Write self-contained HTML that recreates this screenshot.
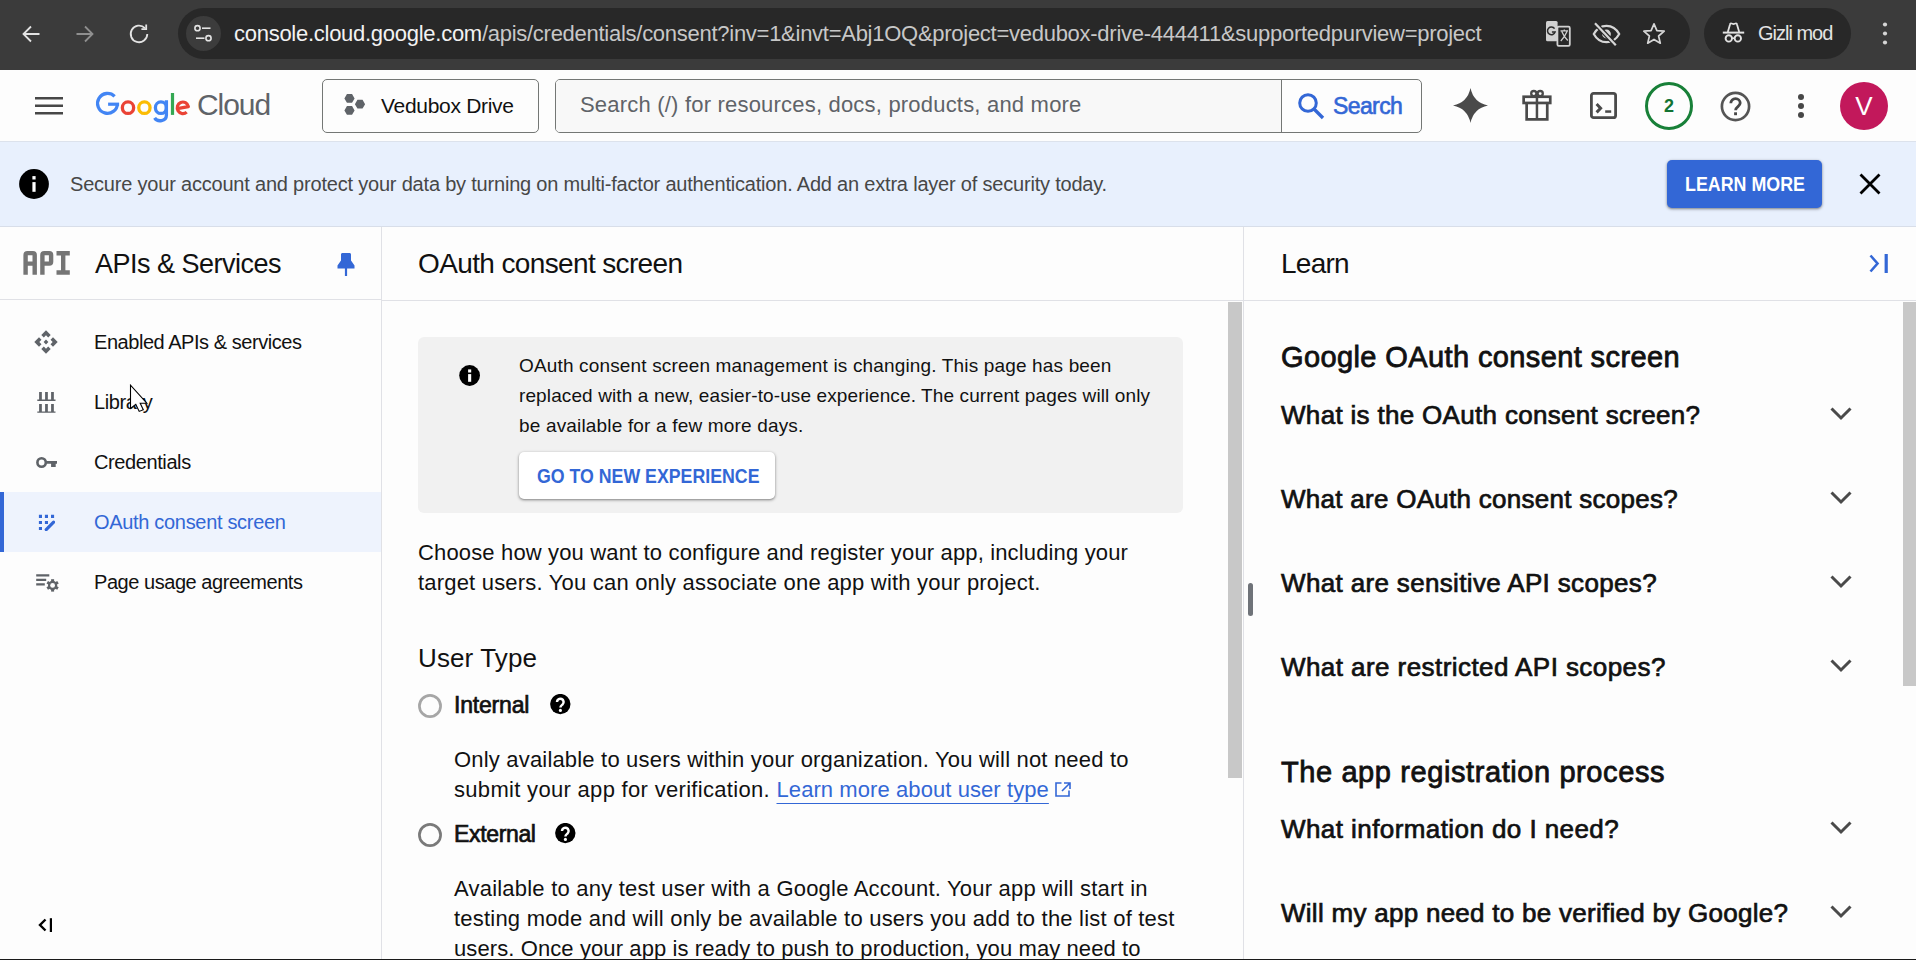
<!DOCTYPE html>
<html><head><meta charset="utf-8">
<style>
*{box-sizing:border-box;margin:0;padding:0}
html,body{width:1916px;height:960px;overflow:hidden;background:#fdfdfd;font-family:"Liberation Sans",sans-serif;color:#111}
.a{position:absolute;white-space:nowrap}
svg{position:absolute;display:block}
#chrome{position:absolute;left:0;top:0;width:1916px;height:70px;background:#3b3b3b}
#urlpill{position:absolute;left:178px;top:8px;width:1512px;height:51px;border-radius:26px;background:#282828}
#incog{position:absolute;left:1704px;top:8px;width:147px;height:51px;border-radius:26px;background:#282828}
#hdr{position:absolute;left:0;top:70px;width:1916px;height:71px;background:#fdfdfd}
#banner{position:absolute;left:0;top:141px;width:1916px;height:86px;background:#e8f0fd;border-top:1px solid #dce2ec;border-bottom:1px solid #d8dee9}
.btnshadow{box-shadow:0 1px 2px rgba(0,0,0,.3),0 1px 3px 1px rgba(0,0,0,.15)}
#nav{position:absolute;left:0;top:227px;width:382px;height:733px;border-right:1px solid #e0e1e6}
.navitem{position:absolute;left:0;width:381px;height:60px}
.navtxt{position:absolute;left:94px;font-size:20px;color:#111;white-space:nowrap}
#main{position:absolute;left:382px;top:227px;width:862px;height:733px;border-right:1px solid #e0e1e6}
#learn{position:absolute;left:1244px;top:227px;width:672px;height:733px}
.hline{position:absolute;height:1px;background:#e0e1e6}
.q{position:absolute;left:1281px;font-size:26px;font-weight:normal;-webkit-text-stroke:0.7px #111;color:#111;white-space:nowrap}
</style></head><body>

<div id="chrome">
  <svg style="left:21px;top:24px" width="20" height="20" viewBox="0 0 20 20"><path d="M18.5 10H2.5M10 2.5L2.5 10L10 17.5" fill="none" stroke="#e3e3e3" stroke-width="1.8"/></svg>
  <svg style="left:75px;top:24px" width="20" height="20" viewBox="0 0 20 20"><path d="M1.5 10H17.5M10 2.5L17.5 10L10 17.5" fill="none" stroke="#8f8f8f" stroke-width="1.8"/></svg>
  <svg style="left:127px;top:21.5px" width="24" height="24" viewBox="0 0 24 24"><path d="M20.3 12A8.3 8.3 0 1 1 17.9 6.1" fill="none" stroke="#e3e3e3" stroke-width="1.8"/><path d="M19.2 2.4V7.2H14.4" fill="none" stroke="#e3e3e3" stroke-width="1.8"/></svg>
  <div id="urlpill"></div>
  <div style="position:absolute;left:186px;top:16px;width:35px;height:35px;border-radius:50%;background:#3c3c3c"></div>
  <svg style="left:193px;top:24px" width="21" height="19" viewBox="0 0 21 19"><circle cx="4.5" cy="4.2" r="2.6" fill="none" stroke="#e3e3e3" stroke-width="1.6"/><path d="M9 4.2h8.5" stroke="#e3e3e3" stroke-width="1.6"/><circle cx="15.5" cy="14.2" r="2.6" fill="none" stroke="#e3e3e3" stroke-width="1.6"/><path d="M3 14.2h8.5" stroke="#e3e3e3" stroke-width="1.6"/></svg>
  <div class="a" id="url" style="left:234px;top:21px;font-size:22px;line-height:26px;color:#c7c7c7;letter-spacing:-0.27px"><span style="color:#f2f2f2">console.cloud.google.com</span>/apis/credentials/consent?inv=1&amp;invt=Abj1OQ&amp;project=vedubox-drive-444411&amp;supportedpurview=project</div>
  <svg style="left:1545px;top:20px" width="26" height="27" viewBox="0 0 26 27"><rect x="1" y="0.9" width="11.6" height="20.3" rx="1.5" fill="#d0d0d0"/><rect x="12.4" y="6.6" width="12.4" height="19.3" rx="1.3" fill="#282828" stroke="#d0d0d0" stroke-width="1.8"/><path d="M9.6 8.6A3.9 3.9 0 1 0 10.1 12.1H6.9" fill="none" stroke="#2a2a2a" stroke-width="1.5"/><path d="M15.5 10.8H23M19.3 9.4V10.8M16.8 11.6Q19.2 17.5 22.8 20.6M22 11.6Q19.5 17.5 15.8 21" fill="none" stroke="#d0d0d0" stroke-width="1.3"/></svg>
  <svg style="left:1592px;top:22px" width="29" height="24" viewBox="0 0 29 24"><path d="M1.8 12C4.8 6.4 9.3 3.8 14.5 3.8S24.2 6.4 27.2 12C24.2 17.6 19.7 20.2 14.5 20.2S4.8 17.6 1.8 12z" fill="none" stroke="#d6d6d6" stroke-width="2.2"/><circle cx="14.5" cy="12" r="4.4" fill="#d6d6d6"/><path d="M3 1.2L23.8 23.2" stroke="#282828" stroke-width="4.6"/><path d="M3 1.2L23.8 23.2" stroke="#d6d6d6" stroke-width="2.2"/></svg>
  <svg style="left:1642px;top:22px" width="24" height="23" viewBox="0 0 24 23"><path d="M12 1.8L14.9 8.6L22.2 9.2L16.6 14L18.3 21.2L12 17.4L5.7 21.2L7.4 14L1.8 9.2L9.1 8.6z" fill="none" stroke="#d6d6d6" stroke-width="1.7" stroke-linejoin="round"/></svg>
  <div id="incog"></div>
  <svg style="left:1722px;top:22px" width="23" height="21" viewBox="0 0 23 21"><path d="M5.8 10L8 2.4C8.2 1.6 8.8 1.3 9.5 1.5L11.5 2.1L13.5 1.5C14.2 1.3 14.8 1.6 15 2.4L17.2 10" fill="none" stroke="#e3e3e3" stroke-width="1.8"/><path d="M0.8 10.6h21.4" stroke="#e3e3e3" stroke-width="2"/><circle cx="6.8" cy="16.4" r="3.2" fill="none" stroke="#e3e3e3" stroke-width="1.9"/><circle cx="15.8" cy="16.4" r="3.2" fill="none" stroke="#e3e3e3" stroke-width="1.9"/><path d="M10 16.2h2.6" stroke="#e3e3e3" stroke-width="1.6"/></svg>
  <div class="a" id="gizli" style="left:1758px;top:20px;font-size:20px;line-height:26px;color:#e3e3e3;letter-spacing:-1.0px">Gizli mod</div>
  <svg style="left:1882px;top:22px" width="6" height="23" viewBox="0 0 6 23"><circle cx="3" cy="2.5" r="2.1" fill="#d6d6d6"/><circle cx="3" cy="11.5" r="2.1" fill="#d6d6d6"/><circle cx="3" cy="20.5" r="2.1" fill="#d6d6d6"/></svg>
</div>

<div id="hdr">
  <svg style="left:35px;top:27px" width="28" height="18" viewBox="0 0 28 18"><path d="M0 1.25h28M0 8.75h28M0 16.25h28" stroke="#474747" stroke-width="2.6"/></svg>
  <svg style="left:90px;top:15px" width="110" height="42" viewBox="0 0 110 42"><path d="M24.6 11.4A9.95 9.95 0 1 0 27.45 18.7" fill="none" stroke="#4285f4" stroke-width="3.3"/><rect x="18.1" y="17.6" width="11" height="3.2" fill="#4285f4"/><ellipse cx="38" cy="22.65" rx="5.65" ry="5.8" fill="none" stroke="#ea4335" stroke-width="3.3"/><ellipse cx="54.4" cy="22.65" rx="5.65" ry="5.8" fill="none" stroke="#fbbc04" stroke-width="3.3"/><ellipse cx="70.9" cy="22.65" rx="5.5" ry="5.8" fill="none" stroke="#4285f4" stroke-width="3.3"/><path d="M76.4 15.2V30.2C76.4 36.2 67.6 37.6 64.6 32.8" fill="none" stroke="#4285f4" stroke-width="3.3"/><rect x="80.9" y="8" width="3.2" height="21.9" fill="#34a853"/><path d="M87.3 23.6L98.4 21.6A5.65 5.8 0 1 0 96.7 27.1" fill="none" stroke="#ea4335" stroke-width="3.2" stroke-linejoin="round"/></svg>
  <div class="a" id="gcloud" style="left:197px;top:17px;font-size:30px;line-height:36px;color:#5f6368;letter-spacing:-1.05px">Cloud</div>
  <div style="position:absolute;left:322px;top:9px;width:217px;height:54px;border:1px solid #747775;border-radius:5px"></div>
  <svg style="left:344px;top:23px" width="22" height="23" viewBox="0 0 22 23"><path d="M0.40 5.40L2.95 0.98L8.05 0.98L10.60 5.40L8.05 9.82L2.95 9.82ZM10.90 11.20L13.45 6.78L18.55 6.78L21.10 11.20L18.55 15.62L13.45 15.62ZM0.40 17.40L2.95 12.98L8.05 12.98L10.60 17.40L8.05 21.82L2.95 21.82Z" fill="#5f6368"/></svg>
  <div class="a" id="proj" style="left:381px;top:24px;font-size:21px;line-height:24px;color:#111;letter-spacing:-0.3px">Vedubox Drive</div>
  <div style="position:absolute;left:555px;top:9px;width:867px;height:54px;border:1px solid #747775;border-radius:5px;background:#fdfdfd;overflow:hidden"><div style="position:absolute;left:0;top:0;width:726px;height:52px;background:#f8f8f8;border-right:1px solid #747775"></div></div>
  <div class="a" id="ph" style="top:22px;font-size:22px;line-height:26px;color:#5f6368;letter-spacing:0.2px;left:580px">Search (/) for resources, docs, products, and more</div>
  <svg style="left:1297px;top:22px" width="28" height="28" viewBox="0 0 28 28"><circle cx="11" cy="11" r="8.3" fill="none" stroke="#3367d6" stroke-width="3"/><path d="M17 17L26 26" stroke="#3367d6" stroke-width="3.4"/></svg>
  <div class="a" id="sbtn" style="left:1333px;top:23px;font-size:23px;line-height:26px;color:#3367d6;font-weight:normal;-webkit-text-stroke:0.6px #3367d6;letter-spacing:-0.6px">Search</div>
  <svg style="left:1453px;top:18px" width="35" height="35" viewBox="0 0 35 35"><path d="M17.5 0Q20.5 14.5 35 17.5Q20.5 20.5 17.5 35Q14.5 20.5 0 17.5Q14.5 14.5 17.5 0Z" fill="#4a4a4a"/></svg>
  <svg style="left:1521px;top:19px" width="32" height="33" viewBox="0 0 32 33"><rect x="2.65" y="7.75" width="26.6" height="6.2" fill="none" stroke="#4a4a4a" stroke-width="2.7"/><path d="M5.65 14V30.35H26.25V14" fill="none" stroke="#4a4a4a" stroke-width="2.7"/><path d="M15.95 7.5V30.5" stroke="#4a4a4a" stroke-width="2.5"/><circle cx="12.8" cy="4.6" r="2.6" fill="none" stroke="#4a4a4a" stroke-width="2.3"/><circle cx="19.2" cy="4.6" r="2.6" fill="none" stroke="#4a4a4a" stroke-width="2.3"/></svg>
  <svg style="left:1590px;top:22px" width="27" height="27" viewBox="0 0 27 27"><rect x="1.4" y="1.4" width="24.2" height="24.2" rx="2.2" fill="none" stroke="#4a4a4a" stroke-width="2.8"/><path d="M6.6 12L10.6 16.2L6.6 20.4" fill="none" stroke="#4a4a4a" stroke-width="3"/><rect x="15.2" y="18.3" width="6" height="2.5" fill="#4a4a4a"/></svg>
  <div style="position:absolute;left:1645px;top:12px;width:48px;height:48px;border:3px solid #188038;border-radius:50%"></div>
  <div class="a" style="left:1645px;top:25px;width:48px;text-align:center;font-size:18px;line-height:22px;font-weight:bold;color:#137333">2</div>
  <svg style="left:1719.5px;top:21px" width="31" height="31" viewBox="0 0 31 31"><circle cx="15.5" cy="15.5" r="13.6" fill="none" stroke="#555" stroke-width="2.7"/><path d="M10.8 12.3C10.8 9.6 12.9 7.6 15.5 7.6S20.2 9.6 20.2 12.1C20.2 15.6 15.6 15.6 15.6 19.3" fill="none" stroke="#474747" stroke-width="2.8"/><rect x="14.1" y="21.3" width="2.9" height="2.9" fill="#474747"/></svg>
  <svg style="left:1797px;top:24px" width="8" height="24" viewBox="0 0 8 24"><circle cx="4" cy="3" r="3" fill="#474747"/><circle cx="4" cy="12" r="3" fill="#474747"/><circle cx="4" cy="21" r="3" fill="#474747"/></svg>
  <div style="position:absolute;left:1840px;top:12px;width:48px;height:48px;border-radius:50%;background:#c2185b"></div>
  <div class="a" style="left:1840px;top:21px;width:48px;text-align:center;font-size:26px;line-height:30px;color:#fff">V</div>
</div>
<div id="banner">
  <svg style="left:19px;top:27px" width="30" height="30" viewBox="0 0 30 30"><circle cx="15" cy="15" r="14.9" fill="#000"/><rect x="13.4" y="13.1" width="3.2" height="9.7" fill="#fff"/><rect x="13.4" y="7.1" width="3.2" height="3.4" fill="#fff"/></svg>
  <div class="a" id="btxt" style="left:70px;top:31px;font-size:20px;line-height:22px;color:#474747;letter-spacing:-0.2px">Secure your account and protect your data by turning on multi-factor authentication. Add an extra layer of security today.</div>
  <div class="btnshadow" style="position:absolute;left:1667px;top:18px;width:155px;height:48px;border-radius:5px;background:#3367d6"></div>
  <div class="a" id="lm" style="left:1685px;top:31px;font-size:20px;line-height:22px;color:#fff;font-weight:bold;transform:scaleX(0.892);transform-origin:0 0">LEARN MORE</div>
  <svg style="left:1859px;top:31px" width="22" height="22" viewBox="0 0 22 22"><path d="M1.5 1.5L20.5 20.5M20.5 1.5L1.5 20.5" stroke="#000" stroke-width="2.8"/></svg>
</div>

<div id="nav">
  <svg style="left:23px;top:24px" width="47" height="24" viewBox="0 0 47 24"><path fill-rule="evenodd" fill="#757575" d="M0.4 23.7V4Q0.4 0 4.4 0H9.9Q13.9 0 13.9 4V23.7H9.5V14.8H4.8V23.7ZM4.8 4.2V10.6H9.5V4.2Z M17.2 23.7V4Q17.2 0 21.2 0H26.3Q30.3 0 30.3 4V10.8Q30.3 14.8 26.3 14.8H21.6V23.7ZM21.6 4.2V10.6H25.9V4.2Z M33.5 0H46.8V4.4H42.4V19.3H46.8V23.7H33.5V19.3H38V4.4H33.5Z"/></svg>
  <div class="a" id="apis" style="left:95px;top:20.5px;font-size:27px;line-height:32px;color:#111;letter-spacing:-0.5px">APIs &amp; Services</div>
  <svg style="left:337px;top:26px" width="18" height="23" viewBox="0 0 18 23"><path d="M4 1.5C4 0.7 4.6 0 5.5 0H12.5C13.4 0 14 0.7 14 1.5V7.5L17.5 12.5V15.5H0.5V12.5L4 7.5z" fill="#3367d6"/><path d="M9 15v8" stroke="#3367d6" stroke-width="2.2"/></svg>
  <div class="hline" style="left:0;top:72px;width:381px"></div>
  <svg style="left:34.4px;top:103.2px" width="24" height="24" viewBox="0 0 24 24"><path fill="#5f6368" d="M12 0.3L16.7 5L14.2 7.5L12 5.3L9.8 7.5L7.3 5Z M23.7 12L19 16.7L16.5 14.2L18.7 12L16.5 9.8L19 7.3Z M12 23.7L7.3 19L9.8 16.5L12 18.7L14.2 16.5L16.7 19Z M0.3 12L5 7.3L7.5 9.8L5.3 12L7.5 14.2L5 16.7Z M12 9.6L14.4 12L12 14.4L9.6 12Z"/></svg>
  <div class="navtxt" id="n1" style="top:103px;line-height:24px;letter-spacing:-0.455px">Enabled APIs &amp; services</div>
  <svg style="left:37px;top:164px" width="19" height="23" viewBox="0 0 19 23"><path fill="#5f6368" d="M2.1 1.1h2.75v8H2.1z M8.1 1.1h2.75v8H8.1z M14.1 1.1h2.75v8h-2.75z M0.3 8.6h18.2v1.3H0.3z M2.1 13.1h2.75v8H2.1z M8.1 13.1h2.75v8H8.1z M14.1 13.1h2.75v8h-2.75z M0.3 20.4h18.2v1.3H0.3z"/></svg>
  <div class="navtxt" id="n2" style="top:163px;line-height:24px;letter-spacing:-0.4px">Library</div>
  <svg style="left:35px;top:228px" width="23" height="13" viewBox="0 0 23 13"><circle cx="6.6" cy="7.5" r="4.2" fill="none" stroke="#5f6368" stroke-width="2.6"/><path fill="#5f6368" d="M10.5 6h11.5v2.8H10.5z M16.1 8.8h4.6v3.1h-4.6z"/></svg>
  <div class="navtxt" id="n3" style="top:223px;line-height:24px;letter-spacing:-0.4px">Credentials</div>
  <div class="navitem" style="top:265px;background:#eef3fd"></div>
  <div style="position:absolute;left:0;top:265px;width:4px;height:60px;background:#3367d6"></div>
  <svg style="left:38px;top:287px" width="17" height="17" viewBox="0 0 17 17"><path fill="#3367d6" d="M0.9 0.8h3.1v3.1H0.9z M6.9 0.8h3.1v3.1H6.9z M13 0.8h3.1v3.1H13z M0.9 7h3.1v3.1H0.9z M6.9 7h3.1v3.1H6.9z M0.9 12.9h3.1v3.1H0.9z"/><path d="M8.2 15.6L15.6 8.2" stroke="#3367d6" stroke-width="3.2" stroke-linecap="round"/></svg>
  <div class="navtxt" id="n4" style="top:283px;line-height:24px;color:#3367d6;letter-spacing:-0.316px">OAuth consent screen</div>
  <svg style="left:36px;top:346px" width="23" height="20" viewBox="0 0 23 20"><path d="M0.2 2.3h13.1M0.2 6.9h10M0.2 11.3h8.6" stroke="#5f6368" stroke-width="2.3"/><g fill="#5f6368"><rect x="15.1" y="6.2" width="3" height="4" transform="rotate(0 16.6 12.4)" /><rect x="15.1" y="6.2" width="3" height="4" transform="rotate(60 16.6 12.4)" /><rect x="15.1" y="6.2" width="3" height="4" transform="rotate(120 16.6 12.4)" /><rect x="15.1" y="6.2" width="3" height="4" transform="rotate(180 16.6 12.4)" /><rect x="15.1" y="6.2" width="3" height="4" transform="rotate(240 16.6 12.4)" /><rect x="15.1" y="6.2" width="3" height="4" transform="rotate(300 16.6 12.4)" /><circle cx="16.6" cy="12.4" r="4.6"/></g><circle cx="16.6" cy="12.4" r="2.4" fill="#fdfdfd"/></svg>
  <div class="navtxt" id="n5" style="top:343px;line-height:24px;letter-spacing:-0.45px">Page usage agreements</div>
  <svg style="left:38px;top:691px" width="15" height="15" viewBox="0 0 15 15"><path d="M7.5 1.5L2 7L7.5 12.5" fill="none" stroke="#000" stroke-width="2.4"/><path d="M12.9 0.2v13.8" stroke="#000" stroke-width="2.2"/></svg>
</div>
<div id="main">
  <div class="a" id="mtitle" style="left:36px;top:20.5px;font-size:28px;line-height:32px;color:#111;letter-spacing:-0.63px">OAuth consent screen</div>
  <div class="hline" style="left:0;top:73px;width:861px"></div>
  <div style="position:absolute;left:846px;top:75px;width:14px;height:476px;background:#c8c8c8"></div>
  <div style="position:absolute;left:36px;top:110px;width:765px;height:176px;border-radius:6px;background:#f1f1f1"></div>
  <svg style="left:76.9px;top:137.8px" width="22" height="22" viewBox="0 0 22 22"><circle cx="10.6" cy="10.5" r="10.4" fill="#000"/><rect x="9.1" y="9.1" width="3.1" height="7.7" fill="#fff"/><rect x="9.1" y="4.4" width="3.1" height="3.1" fill="#fff"/></svg>
  <div class="a" id="ib1" style="left:137px;top:124px;font-size:19px;line-height:30px;color:#111;letter-spacing:0.156px">OAuth consent screen management is changing. This page has been</div>
  <div class="a" id="ib2" style="left:137px;top:154px;font-size:19px;line-height:30px;color:#111;letter-spacing:0.113px">replaced with a new, easier-to-use experience. The current pages will only</div>
  <div class="a" id="ib3" style="left:137px;top:184px;font-size:19px;line-height:30px;color:#111;letter-spacing:0.171px">be available for a few more days.</div>
  <div class="btnshadow" style="position:absolute;left:137px;top:225px;width:256px;height:47px;border-radius:5px;background:#fff"></div>
  <div class="a" id="gobtn" style="left:155px;top:238px;font-size:19.5px;line-height:22px;color:#3367d6;font-weight:bold;transform:scaleX(0.91);transform-origin:0 0">GO TO NEW EXPERIENCE</div>
  <div class="a" id="ch1" style="left:36px;top:311px;font-size:22px;line-height:30px;color:#111;letter-spacing:0.15px">Choose how you want to configure and register your app, including your</div>
  <div class="a" id="ch2" style="left:36px;top:341px;font-size:22px;line-height:30px;color:#111;letter-spacing:0.196px">target users. You can only associate one app with your project.</div>
  <div class="a" id="ut" style="left:36px;top:416px;font-size:26px;line-height:30px;color:#111;letter-spacing:0.125px">User Type</div>
  <svg style="left:36px;top:467px" width="24" height="24" viewBox="0 0 24 24"><circle cx="12" cy="12" r="10.6" fill="none" stroke="#a6a6a6" stroke-width="2.7"/></svg>
  <div class="a" id="int" style="left:72px;top:465px;font-size:23px;line-height:26px;;;letter-spacing:-0.186px;font-weight:normal;-webkit-text-stroke:0.7px #111;color:#111">Internal</div>
  <svg style="left:168.2px;top:467.1px" width="21" height="21" viewBox="0 0 21 21"><circle cx="10.3" cy="10.1" r="10.2" fill="#000"/><path d="M7 8A3.3 3.3 0 1 1 12.6 10.4C11.2 11.5 10.4 12 10.4 13.6" stroke="#fff" stroke-width="2.5" fill="none"/><circle cx="10.4" cy="16.4" r="1.55" fill="#fff"/></svg>
  <div class="a" id="o1" style="left:72px;top:518px;font-size:22px;line-height:30px;color:#111;letter-spacing:0.186px">Only available to users within your organization. You will not need to</div>
  <div class="a" id="o2" style="left:72px;top:548px;font-size:22px;line-height:30px;color:#111;letter-spacing:0.311px">submit your app for verification.</div>
  <div class="a" id="lnk" style="left:394.5px;top:548px;font-size:22px;line-height:30px;color:#3367d6;text-decoration:underline;text-underline-offset:6px;text-decoration-thickness:1px;text-decoration-skip-ink:none;letter-spacing:0.08px">Learn more about user type</div>
  <svg style="left:673px;top:555px" width="17" height="15" viewBox="0 0 17 15"><path d="M6.5 1H1v13h13V8.5" fill="none" stroke="#3367d6" stroke-width="1.6"/><path d="M9 1h6v6M15 1L7 9" fill="none" stroke="#3367d6" stroke-width="1.6"/></svg>
  <svg style="left:36px;top:596px" width="24" height="24" viewBox="0 0 24 24"><circle cx="12" cy="12" r="10.6" fill="none" stroke="#7a7a7a" stroke-width="2.7"/></svg>
  <div class="a" id="ext" style="left:72px;top:594px;font-size:23px;line-height:26px;;;letter-spacing:-0.343px;font-weight:normal;-webkit-text-stroke:0.7px #111;color:#111">External</div>
  <svg style="left:173.4px;top:596.1px" width="21" height="21" viewBox="0 0 21 21"><circle cx="10.3" cy="10.1" r="10.2" fill="#000"/><path d="M7 8A3.3 3.3 0 1 1 12.6 10.4C11.2 11.5 10.4 12 10.4 13.6" stroke="#fff" stroke-width="2.5" fill="none"/><circle cx="10.4" cy="16.4" r="1.55" fill="#fff"/></svg>
  <div class="a" id="e1" style="left:72px;top:647px;font-size:22px;line-height:30px;color:#111;letter-spacing:0.214px">Available to any test user with a Google Account. Your app will start in</div>
  <div class="a" id="e2" style="left:72px;top:677px;font-size:22px;line-height:30px;color:#111;letter-spacing:0.213px">testing mode and will only be available to users you add to the list of test</div>
  <div class="a" id="e3" style="left:72px;top:707px;font-size:22px;line-height:30px;color:#111;letter-spacing:0.098px">users. Once your app is ready to push to production, you may need to</div>
</div>
<div id="learn">
  <div class="a" id="ltitle" style="left:37px;top:20.5px;font-size:28px;line-height:32px;color:#111;letter-spacing:-0.75px">Learn</div>
  <svg style="left:625px;top:27px" width="20" height="19" viewBox="0 0 20 19"><path d="M1.5 1.5L8.5 9.5L1.5 17.5" fill="none" stroke="#3367d6" stroke-width="2.6"/><path d="M17.2 0v19" stroke="#3367d6" stroke-width="3.2"/></svg>
  <div class="hline" style="left:0;top:73px;width:672px"></div>
  <div style="position:absolute;left:659px;top:75px;width:13px;height:384px;background:#c8c8c8"></div>
  <div style="position:absolute;left:4px;top:356px;width:5px;height:33px;border-radius:3px;background:#6f7379"></div>
  <div class="a" id="lh1" style="left:37px;top:113px;font-size:29px;line-height:34px;;;letter-spacing:0.388px;font-weight:normal;-webkit-text-stroke:0.8px #111;color:#111">Google OAuth consent screen</div>
  <div class="a q" id="q1" style="left:37px;top:173px;line-height:30px;letter-spacing:0.315px">What is the OAuth consent screen?</div>
  <div class="a q" id="q2" style="left:37px;top:257px;line-height:30px;letter-spacing:0.272px">What are OAuth consent scopes?</div>
  <div class="a q" id="q3" style="left:37px;top:341px;line-height:30px;letter-spacing:0.344px">What are sensitive API scopes?</div>
  <div class="a q" id="q4" style="left:37px;top:425px;line-height:30px;letter-spacing:0.433px">What are restricted API scopes?</div>
  <div class="a" id="lh2" style="left:37px;top:528px;font-size:29px;line-height:34px;;;letter-spacing:0.591px;font-weight:normal;-webkit-text-stroke:0.8px #111;color:#111">The app registration process</div>
  <div class="a q" id="q5" style="left:37px;top:587px;line-height:30px;letter-spacing:0.426px">What information do I need?</div>
  <svg style="left:586px;top:180px" width="22" height="14" viewBox="0 0 22 14"><path d="M1.5 1.5L11 11L20.5 1.5" fill="none" stroke="#4a4a4a" stroke-width="3"/></svg>
  <svg style="left:586px;top:264px" width="22" height="14" viewBox="0 0 22 14"><path d="M1.5 1.5L11 11L20.5 1.5" fill="none" stroke="#4a4a4a" stroke-width="3"/></svg>
  <svg style="left:586px;top:348px" width="22" height="14" viewBox="0 0 22 14"><path d="M1.5 1.5L11 11L20.5 1.5" fill="none" stroke="#4a4a4a" stroke-width="3"/></svg>
  <svg style="left:586px;top:432px" width="22" height="14" viewBox="0 0 22 14"><path d="M1.5 1.5L11 11L20.5 1.5" fill="none" stroke="#4a4a4a" stroke-width="3"/></svg>
  <svg style="left:586px;top:594px" width="22" height="14" viewBox="0 0 22 14"><path d="M1.5 1.5L11 11L20.5 1.5" fill="none" stroke="#4a4a4a" stroke-width="3"/></svg>
  <svg style="left:586px;top:678px" width="22" height="14" viewBox="0 0 22 14"><path d="M1.5 1.5L11 11L20.5 1.5" fill="none" stroke="#4a4a4a" stroke-width="3"/></svg>
  <div class="a q" id="q6" style="left:37px;top:671px;line-height:30px;letter-spacing:0.276px">Will my app need to be verified by Google?</div>
</div>

<svg style="left:129px;top:384px" width="22" height="30" viewBox="0 0 22 30"><path d="M1.5 1.2V24.4L6.8 20.4L10.2 27.4L14.3 25.7L11.2 19.2H17.8Z" fill="#fff" stroke="#000" stroke-width="1.1" stroke-linejoin="miter"/></svg>
<div style="position:absolute;left:0;top:959px;width:1916px;height:1px;background:#1a1a1a"></div>
</body></html>
